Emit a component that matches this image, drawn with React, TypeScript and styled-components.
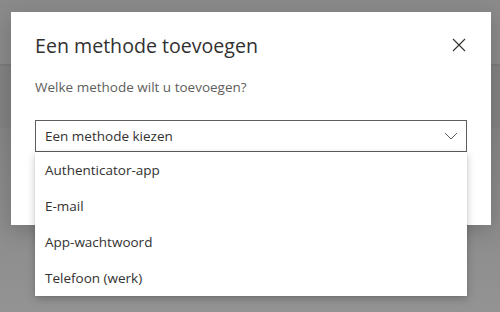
import React, { FC } from 'react';
import styled, { createGlobalStyle } from 'styled-components';

const GlobalStyle = createGlobalStyle`
  html, body {
    margin: 0;
    padding: 0;
    width: 500px;
    height: 312px;
    overflow: hidden;
    font-family: 'Open Sans', 'Noto Sans', sans-serif;
  }
`;

const Page = styled.div`
  position: relative;
  width: 500px;
  height: 312px;
  display: flex;
  flex-direction: column;
  background: #909090;
`;

const HeaderBand = styled.div`
  height: 64px;
  background: #8a8a8a;
  border-bottom: 2px solid #7b7b7b;
`;

const SubBand = styled.div`
  height: 62px;
  background: #828282;
`;

const Body = styled.div`
  flex: 1;
  background: linear-gradient(#858585, #939393);
`;

const Dialog = styled.div`
  position: absolute;
  left: 11px;
  top: 12px;
  width: 480px;
  height: 213px;
  box-sizing: border-box;
  background: #fff;
  padding: 19px 24px 0 24px;
  box-shadow: 0 6px 20px rgba(0, 0, 0, 0.18);
`;

const TitleRow = styled.div`
  display: flex;
  justify-content: space-between;
  align-items: center;
  height: 28px;
`;

const Title = styled.h1`
  margin: 0;
  font-size: 19.6px;
  font-weight: 400;
  color: #323130;
`;

const CloseButton = styled.button`
  border: none;
  background: none;
  padding: 0;
  width: 16px;
  height: 16px;
  display: flex;
  align-items: center;
  justify-content: center;
`;

const Subtitle = styled.p`
  margin: 18px 0 0 0;
  font-size: 13.5px;
  color: #605e5c;
  line-height: 20px;
`;

const SelectWrap = styled.div`
  position: relative;
  margin-top: 23px;
`;

const SelectBox = styled.div`
  height: 32px;
  box-sizing: border-box;
  border: 1px solid #605e5c;
  display: flex;
  align-items: center;
  justify-content: space-between;
  padding: 0 8px 0 9px;
  font-size: 13.5px;
  color: #323130;
`;

const Menu = styled.ul`
  position: absolute;
  left: 0;
  right: 0;
  top: 32px;
  margin: 0;
  padding: 0;
  list-style: none;
  background: #fff;
  box-shadow: 0 3px 8px rgba(0, 0, 0, 0.22), 0 0 2px rgba(0, 0, 0, 0.1);
`;

const MenuItem = styled.li`
  height: 36px;
  display: flex;
  align-items: center;
  padding-left: 10px;
  font-size: 13.5px;
  color: #323130;
`;

const Chevron: FC = () => (
  <svg width="14" height="8" viewBox="0 0 14 8">
    <path d="M1 1 L7 7 L13 1" fill="none" stroke="#605e5c" strokeWidth="1" />
  </svg>
);

const CloseIcon: FC = () => (
  <svg width="14" height="14" viewBox="0 0 14 14">
    <path d="M1 1 L13 13 M13 1 L1 13" fill="none" stroke="#323130" strokeWidth="1.1" />
  </svg>
);

const options = ['Authenticator-app', 'E-mail', 'App-wachtwoord', 'Telefoon (werk)'];

const App: FC = () => {
  return (
    <>
      <GlobalStyle />
      <Page>
        <HeaderBand />
        <SubBand />
        <Body />
        <Dialog>
          <TitleRow>
            <Title>Een methode toevoegen</Title>
            <CloseButton aria-label="Sluiten">
              <CloseIcon />
            </CloseButton>
          </TitleRow>
          <Subtitle>Welke methode wilt u toevoegen?</Subtitle>
          <SelectWrap>
            <SelectBox>
              <span>Een methode kiezen</span>
              <Chevron />
            </SelectBox>
            <Menu>
              {options.map((o) => (
                <MenuItem key={o}>{o}</MenuItem>
              ))}
            </Menu>
          </SelectWrap>
        </Dialog>
      </Page>
    </>
  );
};

export default App;
